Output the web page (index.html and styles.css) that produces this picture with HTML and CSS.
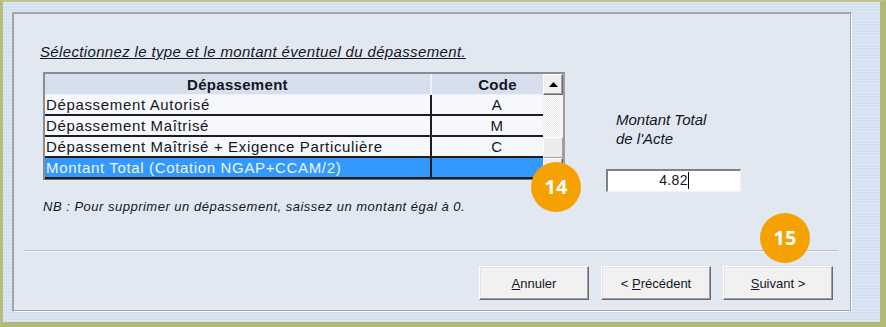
FILE: index.html
```html
<!DOCTYPE html>
<html lang="fr">
<head>
    <meta charset="UTF-8">
    <meta name="viewport" content="width=device-width, initial-scale=1.0">
    <title>Dépassement</title>
    <link rel="stylesheet" href="styles.css">
</head>
<body>
    <div class="window">
        <div class="panel">
            <p class="title">Sélectionnez le type et le montant éventuel du dépassement.</p>
            <div class="body">
                <div class="grid">
                    <table>
                        <thead>
                            <tr><th class="col-dep">Dépassement</th><th class="col-code">Code</th></tr>
                        </thead>
                        <tbody>
                            <tr><td>Dépassement Autorisé</td><td class="code">A</td></tr>
                            <tr><td>Dépassement Maîtrisé</td><td class="code">M</td></tr>
                            <tr><td>Dépassement Maîtrisé + Exigence Particulière</td><td class="code">C</td></tr>
                            <tr class="selected"><td>Montant Total (Cotation NGAP+CCAM/2)</td><td class="code"></td></tr>
                        </tbody>
                    </table>
                    <div class="scrollbar">
                        <div class="sb-btn">
                            <svg width="9" height="5" viewBox="0 0 9 5"><path d="M0 5 L4.5 0 L9 5 Z" fill="#000"/></svg>
                        </div>
                        <div class="sb-track"></div>
                        <div class="sb-thumb"></div>
                        <div class="sb-btn"></div>
                    </div>
                    <span class="badge badge-14">14</span>
                </div>
                <div class="total">
                    <p class="total-label">Montant Total<br>de l'Acte</p>
                    <div class="input">4.82<span class="caret"></span></div>
                </div>
            </div>
            <p class="note">NB : Pour supprimer un dépassement, saissez un montant égal à 0.</p>
            <div class="sep"></div>
            <div class="actions">
                <button class="btn"><u>A</u>nnuler</button>
                <button class="btn">&lt; <u>P</u>récédent</button>
                <div class="btn-wrap">
                    <span class="badge badge-15">15</span>
                    <button class="btn"><u>S</u>uivant &gt;</button>
                </div>
            </div>
        </div>
    </div>
</body>
</html>
```

FILE: styles.css
```css
body {
    margin: 0;
    font-family: 'Liberation Sans', Arial, sans-serif;
    color: #15151f;
}
.window {
    box-sizing: border-box;
    width: 886px;
    height: 327px;
    border-style: solid;
    border-color: #bfc387 #b3b874 #b3b874 #b7bc7c;
    border-width: 2px 6px 5px 3px;
    padding: 10px 28px 10px 9px;
    background: repeating-linear-gradient(#dfe8f6 0 1px, #d4dff0 1px 3px);
}
.panel {
    box-sizing: border-box;
    position: relative;
    width: 840px;
    height: 300px;
    background: #e1e8f1;
    border-style: solid;
    border-width: 2px 1px 1px 2px;
    border-color: #a2a4a8 #fbfcfd #fbfcfd #a2a4a8;
    box-shadow: inset -1px -1px 0 #a2a4a8;
}
.title {
    margin: 30px 0 0 26px;
    font-size: 15px;
    line-height: 16px;
    font-style: italic;
    text-decoration: underline;
    letter-spacing: 0.35px;
}
.body {
    display: flex;
    align-items: flex-start;
    margin: 12px 0 0 29px;
}
.grid {
    position: relative;
    display: flex;
    background: #f7f8fb;
    border-style: solid;
    border-width: 2px 2px 1px 2px;
    border-color: #8a8c90 #9c9ea2 #6e7074 #8a8c90;
}
table {
    border-collapse: separate;
    border-spacing: 0;
    font-size: 15px;
    letter-spacing: 0.65px;
}
th {
    height: 21px;
    padding: 0;
    background: #d6dfee;
    font-weight: bold;
    letter-spacing: 0.3px;
    box-sizing: border-box;
    border-bottom: 1px solid #eef2f8;
}
th.col-dep {
    width: 387px;
    border-right: 2px solid #eef1f6;
}
th.col-code {
    width: 111px;
    padding-left: 20px;
}
td {
    height: 19px;
    line-height: 19px;
    padding: 0 1px;
    border-bottom: 2px solid #1c1c22;
    white-space: nowrap;
}
td:first-child {
    border-right: 2px solid #1c1c22;
}
td.code {
    text-align: center;
    padding-left: 20px;
}
tr.selected td {
    background: #3399fc;
    color: #eef4ff;
}
.scrollbar {
    display: flex;
    flex-direction: column;
    width: 20px;
}
.sb-btn {
    box-sizing: border-box;
    height: 21px;
    display: flex;
    align-items: center;
    justify-content: center;
    background: #f0f0f0;
    border: 1px solid;
    border-color: #fff #6a6a6a #6a6a6a #fff;
    box-shadow: inset -1px -1px 0 #a0a0a0;
}
.sb-track {
    height: 42px;
    background: conic-gradient(#e6e6e6 25%, #fff 0 50%, #e6e6e6 0 75%, #fff 0) 0 0 / 2px 2px;
}
.sb-thumb {
    box-sizing: border-box;
    height: 21px;
    background: #ececec;
    border: 1px solid;
    border-color: #fff #a0a0a0 #a0a0a0 #fff;
}
.badge {
    position: absolute;
    width: 50px;
    height: 50px;
    border-radius: 50%;
    background: #f5a102;
    color: #fff;
    font-family: 'Open Sans', sans-serif;
    font-weight: bold;
    font-size: 20px;
    line-height: 50px;
    text-align: center;
}
.badge-14 {
    left: 486px;
    top: 88px;
}
.badge-15 {
    left: 37px;
    top: -53px;
}
.total {
    margin-left: 51px;
}
.total-label {
    margin: 38px 0 0;
    font-size: 15px;
    line-height: 19px;
    font-style: italic;
}
.input {
    box-sizing: border-box;
    width: 135px;
    height: 23px;
    margin: 21px 0 0 -10px;
    background: #fff;
    border-style: solid;
    border-width: 2px 1px 1px 2px;
    border-color: #808080 #f2f2f2 #f2f2f2 #808080;
    font-size: 14px;
    line-height: 19px;
    letter-spacing: 0.3px;
    text-align: center;
}
.caret {
    display: inline-block;
    width: 1px;
    height: 17px;
    background: #000;
    vertical-align: -4px;
}
.note {
    margin: 7px 0 0 29px;
    font-size: 13px;
    line-height: 15px;
    font-style: italic;
    letter-spacing: 0.5px;
}
.sep {
    margin: 36px 13px 0 10px;
    border-top: 1px solid #b8bcc3;
    border-bottom: 1px solid #f5f7fa;
}
.actions {
    display: flex;
    justify-content: flex-end;
    gap: 12px;
    margin: 14px 18px 0 0;
}
.btn-wrap {
    position: relative;
}
.btn {
    box-sizing: border-box;
    width: 110px;
    height: 34px;
    padding: 0;
    background: #f1f1f1;
    border: 1px solid;
    border-color: #fff #6a6a6a #6a6a6a #fff;
    box-shadow: inset -1px -1px 0 #a0a0a0, inset 1px 1px 0 #e4e4e4;
    font-family: 'Liberation Sans', Arial, sans-serif;
    font-size: 13px;
    color: #15151f;
}
```
